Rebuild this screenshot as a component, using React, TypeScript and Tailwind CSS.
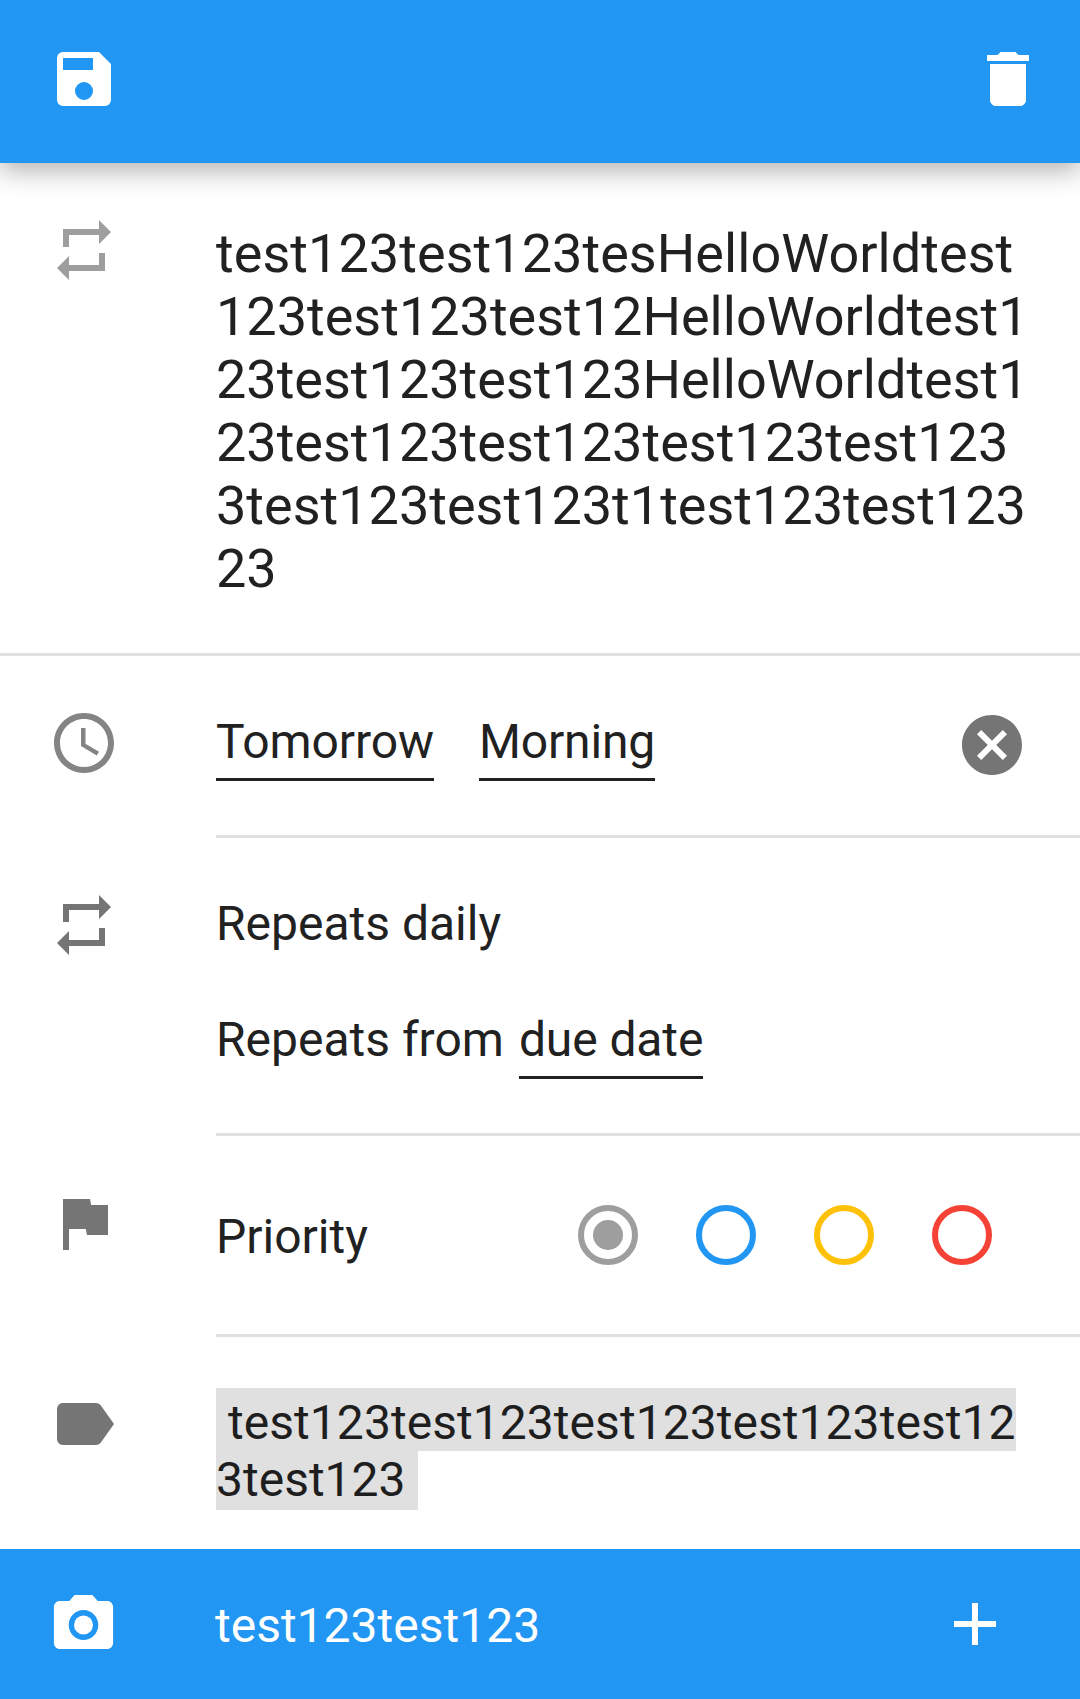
import React from "react";

function Icon({ d, className }: { d: string; className?: string }) {
  return (
    <svg viewBox="0 0 24 24" className={`size-[72px] shrink-0 ${className ?? ""}`} fill="currentColor">
      <path d={d} />
    </svg>
  );
}

const SAVE = "M15 9H5V5h10m-3 14a3 3 0 0 1-3-3 3 3 0 0 1 3-3 3 3 0 0 1 3 3 3 3 0 0 1-3 3m5-16H5a2 2 0 0 0-2 2v14a2 2 0 0 0 2 2h14a2 2 0 0 0 2-2V7l-4-4z";
const TRASH = "M6 19c0 1.1.9 2 2 2h8c1.1 0 2-.9 2-2V7H6v12zM19 4h-3.5l-1-1h-5l-1 1H5v2h14V4z";
const REPEAT = "M7 7h10v3l4-4-4-4v3H5v6h2V7zm10 10H7v-3l-4 4 4 4v-3h12v-6h-2v4z";
const CLOCK = "M11.99 2C6.47 2 2 6.48 2 12s4.47 10 9.99 10C17.52 22 22 17.52 22 12S17.52 2 11.99 2zM12 20c-4.42 0-8-3.58-8-8s3.58-8 8-8 8 3.58 8 8-3.58 8-8 8zm.5-13H11v6l5.25 3.15.75-1.23-4.5-2.67z";
const CANCEL = "M12 2C6.47 2 2 6.47 2 12s4.47 10 10 10 10-4.47 10-10S17.53 2 12 2zm5 13.59L15.59 17 12 13.41 8.41 17 7 15.59 10.59 12 7 8.41 8.41 7 12 10.59 15.59 7 17 8.41 13.41 12 17 15.59z";
const FLAG = "M14.4 6L14 4H5v17h2v-7h5.6l.4 2h7V6z";
const LABEL = "M17.63 5.84C17.27 5.33 16.67 5 16 5L5 5.01C3.9 5.01 3 5.9 3 7v10c0 1.1.9 1.99 2 1.99L16 19c.67 0 1.27-.33 1.63-.84L22 12l-4.37-6.16z";
const PLUS = "M19 13h-6v6h-2v-6H5v-2h6V5h2v6h6v2z";

const LINES = [
  "test123test123tesHelloWorldtest",
  "123test123test12HelloWorldtest1",
  "23test123test123HelloWorldtest1",
  "23test123test123test123test123",
  "3test123test123t1test123test123",
  "23",
];

function Radio({ className, selected }: { className: string; selected?: boolean }) {
  return (
    <span className={`flex size-[60px] items-center justify-center rounded-full border-[6px] ${className}`}>
      {selected && <span className="size-[30px] rounded-full bg-[#9e9e9e]" />}
    </span>
  );
}

export default function App() {
  return (
    <div className="flex h-[1699px] w-[1080px] flex-col overflow-hidden bg-white font-[Roboto,sans-serif] text-[48px] leading-[56px] text-[#212121]">
      <header className="z-10 flex h-[163px] shrink-0 items-start justify-between bg-[#2196f3] pt-[43px] pr-[36px] pl-[48px] text-white shadow-[0_8px_24px_rgba(0,0,0,0.3)]">
        <Icon d={SAVE} />
        <Icon d={TRASH} />
      </header>

      <section className="flex h-[493px] shrink-0 border-b-[3px] border-[#e0e0e0] pl-[48px]">
        <Icon d={REPEAT} className="mt-[51px] text-[#9e9e9e]" />
        <div className="mt-[59px] ml-[96px] text-[54px] leading-[63px] whitespace-nowrap">
          {LINES.map((line) => (
            <div key={line} className="first:tracking-[0.05px]">{line}</div>
          ))}
        </div>
      </section>

      <section className="flex h-[182px] shrink-0 pl-[48px] text-[#757575]">
        <Icon d={CLOCK} className="mt-[51px] text-[#848484]" />
        <div className="ml-[96px] flex flex-1 items-start border-b-[3px] border-[#e0e0e0] text-[#212121]">
          <span className="mt-[58px] h-[67px] w-[218px] border-b-[3px] border-[#212121] tracking-[-0.1px]">Tomorrow</span>
          <span className="mt-[58px] ml-[45px] h-[67px] w-[176px] border-b-[3px] border-[#212121] tracking-[-0.15px]">Morning</span>
          <Icon d={CANCEL} className="mt-[53px] mr-[52px] ml-auto text-[#757575]" />
        </div>
      </section>

      <section className="flex h-[298px] shrink-0 pl-[48px] text-[#757575]">
        <Icon d={REPEAT} className="mt-[51px]" />
        <div className="ml-[96px] flex flex-1 flex-col border-b-[3px] border-[#e0e0e0] text-[#212121]">
          <div className="mt-[58px]">Repeats daily</div>
          <div className="mt-[60px] flex">
            <span>Repeats from</span>
            <span className="ml-[15px] h-[67px] w-[184px] border-b-[3px] border-[#212121] tracking-[-0.1px] whitespace-nowrap">due date</span>
          </div>
        </div>
      </section>

      <section className="flex h-[201px] shrink-0 pl-[48px] text-[#757575]">
        <Icon d={FLAG} className="mt-[51px]" />
        <div className="ml-[96px] flex flex-1 items-start border-b-[3px] border-[#e0e0e0] text-[#212121]">
          <span className="mt-[73px]">Priority</span>
          <div className="mt-[69px] mr-[88px] ml-auto flex gap-[58px]">
            <Radio className="border-[#9e9e9e]" selected />
            <Radio className="border-[#2196f3]" />
            <Radio className="border-[#ffc107]" />
            <Radio className="border-[#f44336]" />
          </div>
        </div>
      </section>

      <section className="flex flex-1 pl-[48px] text-[#757575]">
        <Icon d={LABEL} className="mt-[51px]" />
        <div className="mt-[51px] ml-[96px] flex flex-col items-start text-[#1e1e1e]">
          <span className="h-[63px] bg-[#e0e0e0] pt-[7px] pl-[12px] tracking-[0.05px] whitespace-nowrap">test123test123test123test123test12</span>
          <span className="h-[59px] bg-[#e0e0e0] pt-px pr-[12px] whitespace-nowrap">3test123</span>
        </div>
      </section>

      <footer className="flex h-[150px] shrink-0 items-center bg-[#2196f3] pr-[69px] pl-[48px] text-white">
        <svg viewBox="0 0 24 24" preserveAspectRatio="none" className="mt-px h-[72px] w-[71px]" fill="currentColor">
          <circle cx="12" cy="12" r="3.2" />
          <path d="M9 2L7.17 4H4c-1.1 0-2 .9-2 2v12c0 1.1.9 2 2 2h16c1.1 0 2-.9 2-2V6c0-1.1-.9-2-2-2h-3.17L15 2H9zm3 15c-2.76 0-5-2.24-5-5s2.24-5 5-5 5 2.24 5 5-2.24 5-5 5z" />
        </svg>
        <span className="mt-[4px] ml-[96px]">test123test123</span>
        <Icon d={PLUS} className="ml-auto" />
      </footer>
    </div>
  );
}
